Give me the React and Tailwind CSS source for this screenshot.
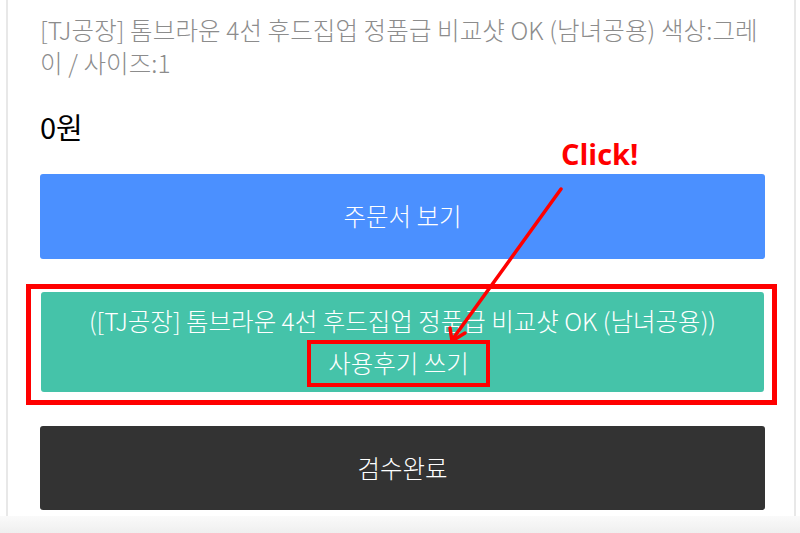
import React from 'react';

const kr = { fontFamily: '"Noto Sans CJK KR", "Noto Sans", sans-serif' };

const App = () => {
    return (
        <div className="relative w-[800px] h-[533px] overflow-hidden bg-white" style={kr}>
            {/* order card */}
            <div className="ml-[6px] mr-[4px] h-[516px] border-x-2 border-[#e8e8e8] pl-[32px] pr-[29px] pt-[13px]">
                <p className="text-[24.5px] leading-[33px] text-[#8c8c8c] font-light tracking-[0.1px]">
                    [TJ공장] 톰브라운 4선 후드집업 정품급 비교샷 OK (남녀공용) 색상:그레
                    <br />이 / 사이즈:1
                </p>
                <p className="mt-[29px] text-[29px] leading-[36px] text-black">0원</p>

                <button className="mt-[30px] flex h-[85px] w-full items-center justify-center rounded-[3px] bg-[#4b90ff] text-[24.5px] font-light text-white">
                    주문서 보기
                </button>

                {/* review button with annotation box */}
                <div className="relative mt-[33px] ml-[1px] mr-[1px]">
                    <button className="flex h-[100px] w-full flex-col items-center justify-center rounded-[3px] bg-[#45c3a9] text-[24.5px] font-light leading-[42px] text-white">
                        <span>([TJ공장] 톰브라운 4선 후드집업 정품급 비교샷 OK (남녀공용))</span>
                        <span className="relative mr-[8px] px-[21px]">
                            사용후기 쓰기
                            <span className="absolute left-0 right-0 top-[-2px] bottom-[-3px] border-[4px] border-[#ff0000]" />
                        </span>
                    </button>
                    <div className="pointer-events-none absolute left-[-15px] right-[-13px] top-[-8px] bottom-[-13px] border-[5px] border-[#ff0000]" />
                </div>

                <button className="mt-[34px] flex h-[84px] w-full items-center justify-center rounded-[3px] bg-[#333333] text-[24.5px] font-light text-white">
                    검수완료
                </button>
            </div>
            <div className="h-[17px] bg-gradient-to-b from-[#fafafa] to-[#efefef]" />

            {/* click annotation */}
            <span
                className="absolute left-[561px] top-[139px] text-[29px] font-bold leading-none text-[#ff0000]"
                style={{ fontFamily: '"Open Sans", sans-serif' }}
            >
                Click!
            </span>
            <svg className="pointer-events-none absolute left-0 top-0" width="800" height="533">
                <line x1="561" y1="189" x2="452" y2="340" stroke="#ff0000" strokeWidth="3.5" strokeLinecap="round" />
                <path d="M450 328 L452 341 L465 333" fill="none" stroke="#ff0000" strokeWidth="3.5" strokeLinecap="round" strokeLinejoin="round" />
            </svg>
        </div>
    );
};

export default App;
